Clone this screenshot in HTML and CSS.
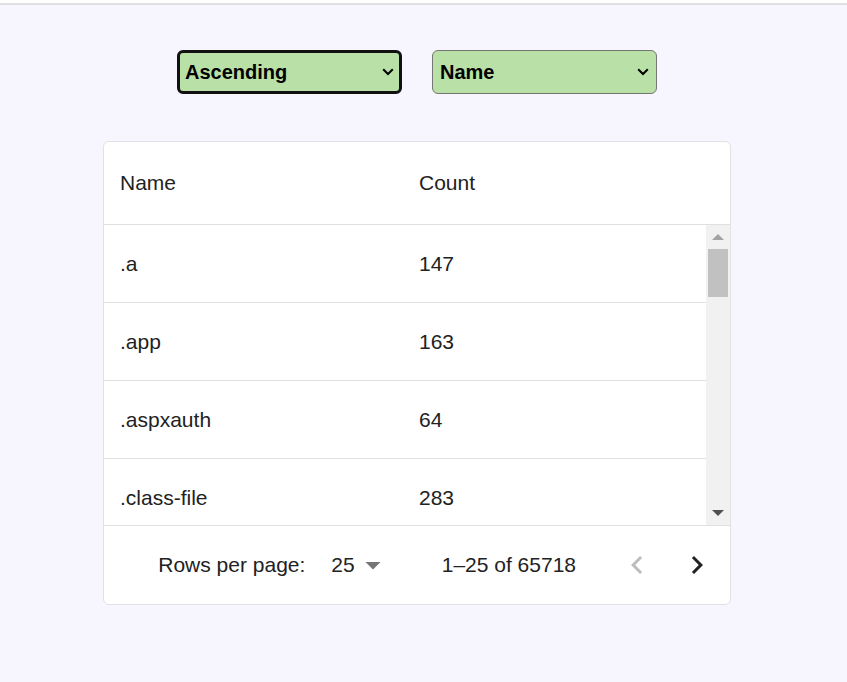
FILE: index.html
```html
<!DOCTYPE html>
<html lang="en">
<head>
<meta charset="utf-8">
<title>Table</title>
<link rel="stylesheet" href="styles.css">
</head>
<body>
<div class="topbar"></div>
<main class="page">
  <div class="controls">
    <div class="select-wrap">
      <select class="select select-focused">
        <option>Ascending</option>
        <option>Descending</option>
      </select>
      <svg class="chev" viewBox="0 0 12 8" width="12" height="8"><polyline points="1.2,1.3 6,6 10.8,1.3" fill="none" stroke="#000" stroke-width="2"/></svg>
    </div>
    <div class="select-wrap">
      <select class="select">
        <option>Name</option>
        <option>Count</option>
      </select>
      <svg class="chev" viewBox="0 0 12 8" width="12" height="8"><polyline points="1.2,1.3 6,6 10.8,1.3" fill="none" stroke="#000" stroke-width="2"/></svg>
    </div>
  </div>

  <div class="card">
    <div class="thead">
      <div class="cell cell-name">Name</div>
      <div class="cell">Count</div>
    </div>
    <div class="tbody">
      <div class="rows">
        <div class="row"><div class="cell cell-name">.a</div><div class="cell">147</div></div>
        <div class="row"><div class="cell cell-name">.app</div><div class="cell">163</div></div>
        <div class="row"><div class="cell cell-name">.aspxauth</div><div class="cell">64</div></div>
        <div class="row"><div class="cell cell-name">.class-file</div><div class="cell">283</div></div>
      </div>
      <div class="scrollbar">
        <div class="sb-btn"><svg viewBox="0 0 12 6" width="12" height="6"><polygon points="0,6 6,0 12,6" fill="#a3a3a3"/></svg></div>
        <div class="sb-track"><div class="sb-thumb"></div></div>
        <div class="sb-btn"><svg viewBox="0 0 12 6" width="12" height="6"><polygon points="0,0 12,0 6,6" fill="#505050"/></svg></div>
      </div>
    </div>
    <div class="footer">
      <span class="rpp-label">Rows per page:</span>
      <div class="rpp-select">
        <span>25</span>
        <svg class="rpp-icon" viewBox="0 0 24 24" width="36" height="36"><path d="M7 10l5 5 5-5z" fill="#757575"/></svg>
      </div>
      <span class="displayed">1–25 of 65718</span>
      <div class="actions">
        <button class="icon-btn" disabled><svg viewBox="0 0 24 24" width="36" height="36"><path d="M15.41 16.59 10.83 12l4.58-4.59L14 6l-6 6 6 6 1.41-1.41z" fill="#bdbdbd"/></svg></button>
        <button class="icon-btn"><svg viewBox="0 0 24 24" width="36" height="36"><path d="M8.59 16.59 13.17 12 8.59 7.41 10 6l6 6-6 6-1.41-1.41z" fill="#222"/></svg></button>
      </div>
    </div>
  </div>
</main>
</body>
</html>
```

FILE: styles.css
```css
* { box-sizing: border-box; }

body {
  margin: 0;
  background: #f7f5fd;
  font-family: "Liberation Sans", Arial, sans-serif;
  color: #222;
}

.topbar {
  height: 5px;
  background: #fff;
  border-bottom: 2px solid #e0dee2;
}

.page {
  width: 628px;
  margin-left: 103px;
}

.controls {
  display: flex;
  justify-content: center;
  gap: 30px;
  margin-top: 45px;
}

.select-wrap {
  position: relative;
  width: 225px;
  height: 44px;
}

.select {
  appearance: none;
  -webkit-appearance: none;
  width: 100%;
  height: 100%;
  margin: 0;
  background: #b9e0a6;
  border: 1px solid #767676;
  border-radius: 6px;
  padding: 0 0 0 7px;
  font-family: "Liberation Sans", Arial, sans-serif;
  font-weight: bold;
  font-size: 20px;
  color: #000;
  outline: none;
}

.select-focused {
  border: 3px solid #111;
  padding-left: 5px;
}

.chev {
  position: absolute;
  right: 8px;
  top: 18px;
  pointer-events: none;
}

.card {
  margin-top: 47px;
  background: #fff;
  border: 1px solid #e3e1e6;
  border-radius: 6px;
  overflow: hidden;
}

.thead {
  display: flex;
  align-items: center;
  height: 83px;
  border-bottom: 1px solid #e0e0e0;
  font-size: 21px;
}

.cell {
  padding-left: 16px;
  font-size: 21px;
  line-height: 30px;
}

.cell-name {
  width: 299px;
  flex: none;
}

.tbody {
  display: flex;
  height: 301px;
  border-bottom: 1px solid #e0e0e0;
  overflow: hidden;
}

.rows {
  flex: 1;
}

.row {
  display: flex;
  align-items: center;
  height: 78px;
  border-bottom: 1px solid #e0e0e0;
}

.scrollbar {
  width: 24px;
  flex: none;
  background: #f1f1f1;
  display: flex;
  flex-direction: column;
}

.sb-btn {
  height: 24px;
  display: flex;
  align-items: center;
  justify-content: center;
  flex: none;
}

.sb-track {
  flex: 1;
  padding: 0 2px;
}

.sb-thumb {
  height: 48px;
  background: #c1c1c1;
}

.footer {
  display: flex;
  justify-content: flex-end;
  align-items: center;
  height: 78px;
  padding-right: 3px;
  font-size: 21px;
  line-height: 36px;
}

.rpp-label {
  margin-right: 26px;
}

.rpp-select {
  position: relative;
  padding-right: 36px;
  margin-right: 51px;
  height: 36px;
}

.rpp-icon {
  position: absolute;
  right: 0;
  top: 0;
}

.displayed {
  margin-right: 31px;
}

.actions {
  display: flex;
}

.icon-btn {
  width: 60px;
  height: 60px;
  padding: 12px;
  border: 0;
  background: transparent;
  display: flex;
  align-items: center;
  justify-content: center;
}
```
